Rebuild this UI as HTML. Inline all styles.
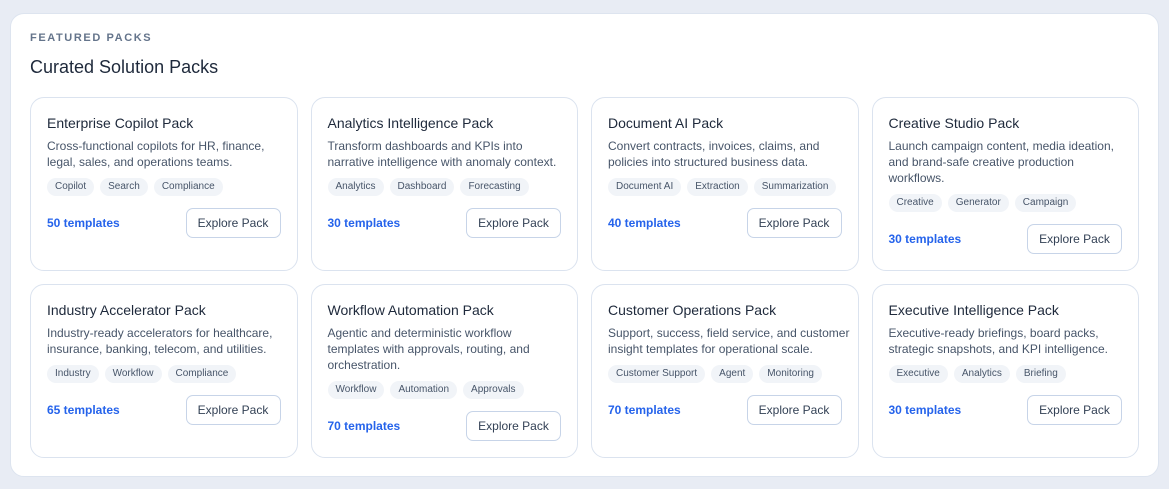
<!DOCTYPE html>
<html><head><style>
*{box-sizing:border-box;margin:0;padding:0}
body{width:1169px;height:489px;background:#e8ecf4;font-family:"Liberation Sans",sans-serif;position:relative;overflow:hidden}
.panel{position:absolute;left:10px;top:13px;width:1149px;height:464px;background:#fff;border-radius:14px;border:1px solid #dde4ef}
.eyebrow{position:absolute;left:19px;top:18px;font-size:11px;font-weight:700;letter-spacing:1.6px;color:#64748b}
h2{position:absolute;left:19px;top:43px;font-size:18px;font-weight:400;color:#1e293b}
.grid{position:absolute;left:19px;top:83px;display:grid;grid-template-columns:repeat(4,267.5px);grid-template-rows:174px 174px;column-gap:13px;row-gap:13px}
.card{border:1px solid #dbe3ef;border-radius:14px;padding:16px 16px 0 16px}
.t{font-size:14px;line-height:20px;color:#1e293b;margin-top:-1px}
.d{font-size:12px;line-height:16px;color:#475569;margin-top:5px;white-space:nowrap}
.tags{display:flex;gap:6px;margin-top:8px}
.tag{background:#f1f4f8;border-radius:9px;height:18px;line-height:18px;padding:0 8px;font-size:10px;color:#475569}
.f{display:flex;justify-content:space-between;align-items:center;margin-top:12px}
.n{font-size:12px;color:#2563eb;font-weight:700}
.b{width:95px;height:30px;border:1px solid #c7d4e8;border-radius:7px;font-size:12px;color:#334155;text-align:center;line-height:28px}
</style></head><body>
<div class="panel">
<div class="eyebrow">FEATURED PACKS</div>
<h2>Curated Solution Packs</h2>
<div class="grid">
<div class="card"><div class="t">Enterprise Copilot Pack</div><div class="d">Cross-functional copilots for HR, finance,<br>legal, sales, and operations teams.</div><div class="tags"><span class="tag">Copilot</span><span class="tag">Search</span><span class="tag">Compliance</span></div><div class="f"><span class="n">50 templates</span><span class="b">Explore Pack</span></div></div>
<div class="card"><div class="t">Analytics Intelligence Pack</div><div class="d">Transform dashboards and KPIs into<br>narrative intelligence with anomaly context.</div><div class="tags"><span class="tag">Analytics</span><span class="tag">Dashboard</span><span class="tag">Forecasting</span></div><div class="f"><span class="n">30 templates</span><span class="b">Explore Pack</span></div></div>
<div class="card"><div class="t">Document AI Pack</div><div class="d">Convert contracts, invoices, claims, and<br>policies into structured business data.</div><div class="tags"><span class="tag">Document AI</span><span class="tag">Extraction</span><span class="tag">Summarization</span></div><div class="f"><span class="n">40 templates</span><span class="b">Explore Pack</span></div></div>
<div class="card"><div class="t">Creative Studio Pack</div><div class="d">Launch campaign content, media ideation,<br>and brand-safe creative production<br>workflows.</div><div class="tags"><span class="tag">Creative</span><span class="tag">Generator</span><span class="tag">Campaign</span></div><div class="f"><span class="n">30 templates</span><span class="b">Explore Pack</span></div></div>
<div class="card"><div class="t">Industry Accelerator Pack</div><div class="d">Industry-ready accelerators for healthcare,<br>insurance, banking, telecom, and utilities.</div><div class="tags"><span class="tag">Industry</span><span class="tag">Workflow</span><span class="tag">Compliance</span></div><div class="f"><span class="n">65 templates</span><span class="b">Explore Pack</span></div></div>
<div class="card"><div class="t">Workflow Automation Pack</div><div class="d">Agentic and deterministic workflow<br>templates with approvals, routing, and<br>orchestration.</div><div class="tags"><span class="tag">Workflow</span><span class="tag">Automation</span><span class="tag">Approvals</span></div><div class="f"><span class="n">70 templates</span><span class="b">Explore Pack</span></div></div>
<div class="card"><div class="t">Customer Operations Pack</div><div class="d">Support, success, field service, and customer<br>insight templates for operational scale.</div><div class="tags"><span class="tag">Customer Support</span><span class="tag">Agent</span><span class="tag">Monitoring</span></div><div class="f"><span class="n">70 templates</span><span class="b">Explore Pack</span></div></div>
<div class="card"><div class="t">Executive Intelligence Pack</div><div class="d">Executive-ready briefings, board packs,<br>strategic snapshots, and KPI intelligence.</div><div class="tags"><span class="tag">Executive</span><span class="tag">Analytics</span><span class="tag">Briefing</span></div><div class="f"><span class="n">30 templates</span><span class="b">Explore Pack</span></div></div>
</div>
</div>
</body></html>
